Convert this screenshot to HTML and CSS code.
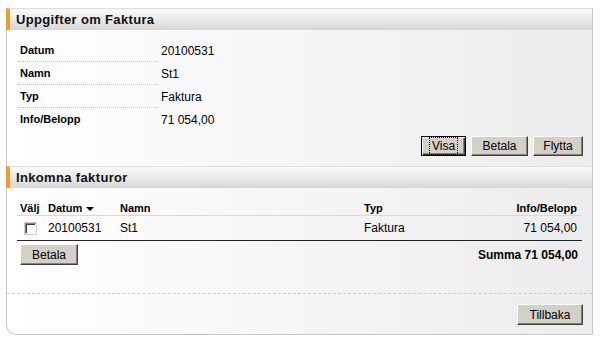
FILE: index.html
```html
<html>
<head>
    <title>Uppgifter om Faktura</title>
    <link rel="stylesheet" href="styles.css">
</head>
<body>
    <div class="panel">
        <div class="panel-head">Uppgifter om Faktura</div>
        <div class="panel-body">
            <div class="info">
                <div class="info-row"><span class="info-label">Datum</span><span class="info-value">20100531</span></div>
                <div class="info-row"><span class="info-label">Namn</span><span class="info-value">St1</span></div>
                <div class="info-row"><span class="info-label">Typ</span><span class="info-value">Faktura</span></div>
                <div class="info-row last"><span class="info-label">Info/Belopp</span><span class="info-value">71 054,00</span></div>
            </div>
            <div class="actions">
                <button class="btn btn-default btn-visa"><span class="focus">Visa</span></button>
                <button class="btn btn-betala">Betala</button>
                <button class="btn btn-flytta">Flytta</button>
            </div>
        </div>

        <div class="panel-head">Inkomna fakturor</div>
        <div class="panel-body">
            <table class="list">
                <colgroup>
                    <col class="c-valj">
                    <col class="c-datum">
                    <col class="c-namn">
                    <col class="c-typ">
                    <col>
                </colgroup>
                <thead>
                    <tr>
                        <th>Välj</th>
                        <th>Datum <span class="sort-arrow"></span></th>
                        <th>Namn</th>
                        <th>Typ</th>
                        <th class="num">Info/Belopp</th>
                    </tr>
                </thead>
                <tbody>
                    <tr>
                        <td><span class="checkbox"></span></td>
                        <td>20100531</td>
                        <td>St1</td>
                        <td>Faktura</td>
                        <td class="num">71 054,00</td>
                    </tr>
                </tbody>
            </table>
            <div class="list-foot">
                <button class="btn btn-pay">Betala</button>
                <span class="sum">Summa 71 054,00</span>
            </div>
        </div>

        <div class="panel-foot">
            <button class="btn btn-back">Tillbaka</button>
        </div>
    </div>
</body>
</html>
```

FILE: styles.css
```css
body {
    margin: 0;
    background: #fff;
    font-family: "Liberation Sans", Arial, sans-serif;
    font-size: 12px;
    color: #000;
}

.panel {
    width: 587px;
    margin: 8px 0 0 6px;
    box-sizing: border-box;
    border: 1px solid #c8c8c8;
    border-top: none;
    border-bottom-left-radius: 10px;
    background: linear-gradient(to right, #ffffff, #ececec);
}

.panel-head {
    height: 21px;
    margin-left: -1px;
    padding-left: 6px;
    border-top: 1px solid #dedede;
    border-left: 4px solid #f0a01e;
    background: linear-gradient(#fbfbfb, #e6e6e6 60%, #d6d6d6);
    font-size: 13px;
    font-weight: bold;
    letter-spacing: 0.35px;
    line-height: 21px;
    color: #111;
}

.panel-body {
    padding: 0 9px 0 11px;
}

/* invoice details */
.info {
    padding-top: 9px;
}

.info-row {
    display: flex;
    height: 23px;
    align-items: center;
}

.info-label {
    width: 138px;
    height: 22px;
    line-height: 22px;
    padding-left: 2px;
    border-bottom: 1px dotted #c4c4c4;
    font-size: 11px;
    font-weight: bold;
}

.info-row.last .info-label {
    border-bottom-color: transparent;
}

.info-value {
    padding-left: 3px;
}

.actions {
    display: flex;
    justify-content: flex-end;
    gap: 5px;
    margin-top: 5px;
    padding-bottom: 10px;
}

/* classic buttons */
.btn {
    height: 20px;
    padding: 0;
    background: #d4d0c8;
    border: 1px solid;
    border-color: #fff #404040 #404040 #fff;
    box-shadow: inset -1px -1px #808080;
    font-family: "Liberation Sans", Arial, sans-serif;
    font-size: 12px;
    color: #000;
}

.btn-default {
    border: 1px solid #000;
    box-shadow: inset 1px 1px #fff, inset -1px -1px #404040, inset -2px -2px #808080;
}

.focus {
    padding: 0 1px;
    outline: 1px dotted #000;
    outline-offset: 1px;
}

.btn-visa { width: 45px; }
.btn-betala { width: 57px; }
.btn-flytta { width: 50px; }
.btn-pay { width: 58px; height: 21px; }
.btn-back { width: 66px; height: 21px; }

/* invoice list */
.list {
    width: 565px;
    margin: 8px 0 0 -1px;
    border-collapse: collapse;
    table-layout: fixed;
    font-size: 12px;
}

.c-valj { width: 28px; }
.c-datum { width: 72px; }
.c-namn { width: 244px; }
.c-typ { width: 110px; }

.list th {
    height: 14px;
    padding: 6px 3px 1px;
    border-bottom: 1px solid #d8d8d8;
    font-size: 11px;
    text-align: left;
    white-space: nowrap;
}

.list td {
    height: 25px;
    padding: 0 3px;
    border-bottom: 1px solid #222;
    white-space: nowrap;
}

.list .num {
    text-align: right;
    padding-right: 5px;
}

.sort-arrow {
    display: inline-block;
    margin-left: 1px;
    vertical-align: 1px;
    border-left: 4px solid transparent;
    border-right: 4px solid transparent;
    border-top: 4px solid #000;
}

.checkbox {
    display: block;
    width: 9px;
    height: 9px;
    margin: 1px 0 0 5px;
    border: 1px solid;
    border-color: #808080 #fff #fff #808080;
    box-shadow: inset 1px 1px #404040;
    background: #fff;
    outline: 1px solid #d4d0c8;
}

.list-foot {
    display: flex;
    justify-content: space-between;
    align-items: center;
    margin-top: 3px;
    padding: 0 5px 28px 2px;
}

.sum {
    font-weight: bold;
}

.panel-foot {
    display: flex;
    justify-content: flex-end;
    padding: 10px 9px 9px;
    border-top: 1px dashed #cccccc;
}
```
